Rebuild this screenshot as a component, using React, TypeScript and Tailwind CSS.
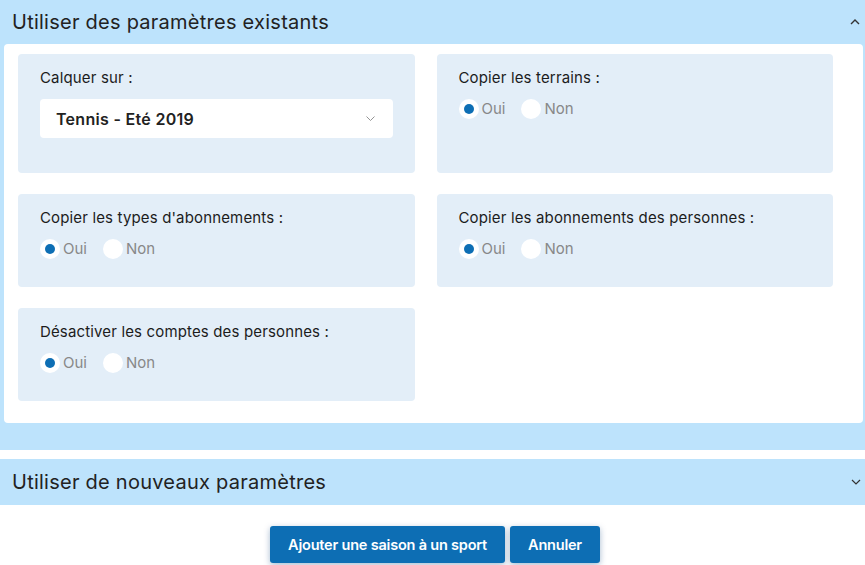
import React from "react";

function Radio({ checked, label }: { checked?: boolean; label: string }) {
  return (
    <label className="flex items-center">
      <span className="flex h-[20px] w-[20px] items-center justify-center rounded-full bg-white">
        {checked && <span className="h-[10px] w-[10px] rounded-full bg-[#0d6eb4]" />}
      </span>
      <span className="ml-[3px] text-[15px] text-[#888] leading-[20px]">{label}</span>
    </label>
  );
}

function RadioCard({ label }: { label: string }) {
  return (
    <div className="rounded-[4px] bg-[#e3eef8] px-[22px] pt-[14px] pb-[28px]">
      <div className="text-[15px] tracking-[0.15px] leading-[20px] text-[#1c1c1c]">{label}</div>
      <div className="mt-[11px] flex gap-[16px]">
        <Radio checked label="Oui" />
        <Radio label="Non" />
      </div>
    </div>
  );
}

export default function App() {
  return (
    <div className="min-h-[565px] w-[865px] bg-white" style={{ fontFamily: "Inter, 'Noto Sans', sans-serif" }}>
      <div className="bg-[#bde3fc] pl-[4px] pr-[2px] pb-[27px]">
        <div className="flex h-[44px] items-center justify-between pl-[8px] pr-[2px]">
          <div className="text-[20px] tracking-[0.25px] text-[#222]">Utiliser des paramètres existants</div>
          <svg width="10" height="6" viewBox="0 0 10 6" className="mr-[1px]">
            <path d="M1 5 L5 1 L9 5" fill="none" stroke="#333" strokeWidth="1.4" />
          </svg>
        </div>
        <div className="rounded-[4px] bg-white pl-[14px] pr-[30px] pt-[10px] pb-[22px]">
          <div className="grid grid-cols-2 gap-x-[22px] gap-y-[21px]">
            <div className="rounded-[4px] bg-[#e3eef8] px-[22px] pt-[14px] pb-[35px]">
              <div className="text-[15px] tracking-[0.15px] leading-[20px] text-[#1c1c1c]">Calquer sur :</div>
              <div className="mt-[11px] flex h-[39px] items-center justify-between rounded-[4px] bg-white pl-[16px] pr-[18px]">
                <span className="text-[16px] tracking-[0.3px] font-semibold text-[#222]">Tennis - Eté 2019</span>
                <svg width="9" height="5" viewBox="0 0 9 5">
                  <path d="M0.5 0.5 L4.5 4.5 L8.5 0.5" fill="none" stroke="#888" strokeWidth="0.9" />
                </svg>
              </div>
            </div>
            <RadioCard label="Copier les terrains :" />
            <RadioCard label="Copier les types d'abonnements :" />
            <RadioCard label="Copier les abonnements des personnes :" />
            <RadioCard label="Désactiver les comptes des personnes :" />
          </div>
        </div>
      </div>
      <div className="mt-[9px] flex h-[46px] items-center justify-between bg-[#bde3fc] pl-[12px] pr-[4px]">
        <div className="text-[20px] tracking-[0.25px] text-[#222]">Utiliser de nouveaux paramètres</div>
        <svg width="10" height="6" viewBox="0 0 10 6">
          <path d="M1 1 L5 5 L9 1" fill="none" stroke="#333" strokeWidth="1.2" />
        </svg>
      </div>
      <div className="mt-[21px] flex justify-center gap-[5px] pl-[5px]">
        <button className="h-[37px] rounded-[3px] bg-[#0d6eb4] px-[18px] text-[14.5px] font-semibold tracking-[-0.2px] text-white shadow-[0_2px_6px_rgba(0,60,120,0.35)]">
          Ajouter une saison à un sport
        </button>
        <button className="h-[37px] rounded-[3px] bg-[#0d6eb4] px-[18px] text-[14.5px] font-semibold tracking-[-0.2px] text-white shadow-[0_2px_6px_rgba(0,60,120,0.35)]">
          Annuler
        </button>
      </div>
    </div>
  );
}
